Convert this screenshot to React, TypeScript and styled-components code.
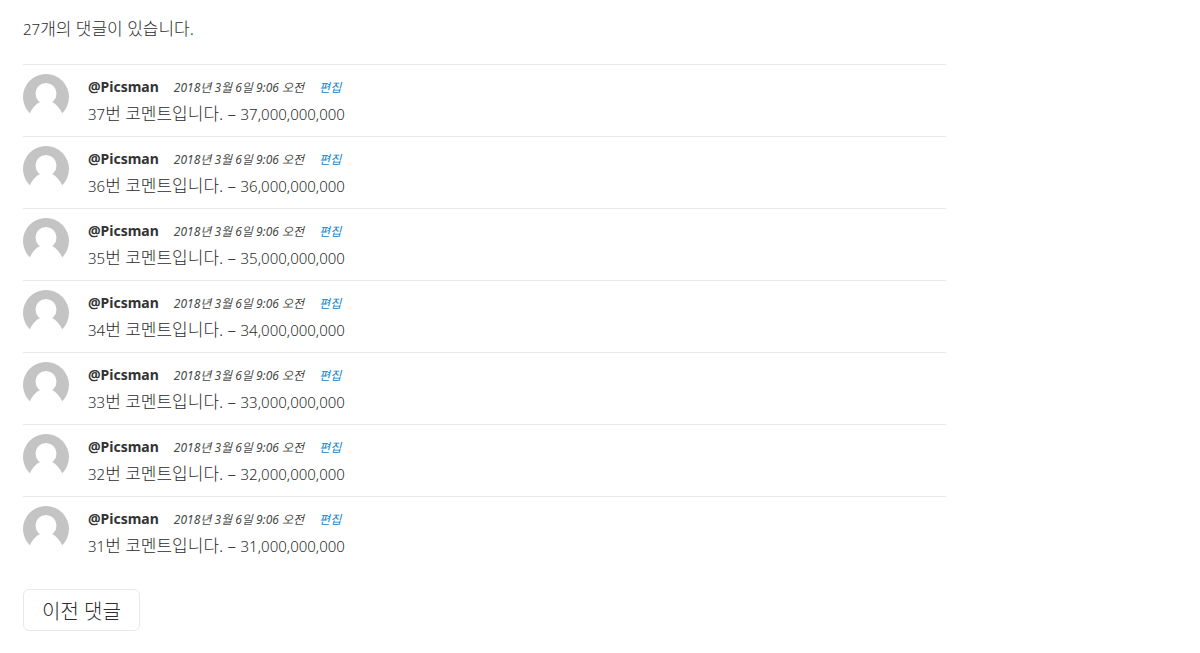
import React from 'react';
import styled, { createGlobalStyle } from 'styled-components';

const GlobalStyle = createGlobalStyle`
  * {
    box-sizing: border-box;
  }

  body {
    margin: 0;
    background: #fff;
    color: #2c2c2c;
    font-family: 'Noto Sans', 'Noto Sans CJK KR', sans-serif;
    font-size: 17px;
    font-weight: 300;
    line-height: 26px;
  }
`;

const Comments = styled.main`
  padding: 16px 23px 22px;
`;

const Count = styled.h2`
  margin: 0 0 22px;
  font-size: 17px;
  font-weight: inherit;
`;

const List = styled.ol`
  width: 80%;
  margin: 0 0 21px;
  padding: 0;
  list-style: none;
`;

const Item = styled.li`
  display: flex;
  gap: 19px;
  min-height: 72px;
  padding: 9px 0;
  border-top: 1px solid #e8e8e8;
`;

const AvatarIcon = styled.svg`
  flex: none;
  width: 46px;
  height: 46px;
`;

const Meta = styled.header`
  display: flex;
  align-items: baseline;
  gap: 15px;
`;

const Author = styled.strong`
  font-size: 14px;
  font-weight: 700;
  color: #333;
`;

const Posted = styled.time`
  font-size: 12px;
  font-style: italic;
  font-weight: 400;
  word-spacing: normal;
  color: #484848;
`;

const EditLink = styled.a`
  font-size: 12px;
  font-style: italic;
  font-weight: 400;
  color: #1484c9;
  text-decoration: none;
`;

const Text = styled.p`
  margin: 0;
`;

const Amount = styled.span`
  font-size: 15px;
`;

const OlderButton = styled.button`
  height: 42px;
  padding: 4px 18px 0;
  border: 1px solid #e8e8e8;
  border-radius: 6px;
  background: #fff;
  color: inherit;
  font: inherit;
  font-size: 20px;
`;

const numbers = [37, 36, 35, 34, 33, 32, 31];

const Avatar = () => (
  <AvatarIcon viewBox="0 0 46 46" aria-hidden="true">
    <circle cx="23" cy="23" r="23" fill="#c4c4c4" />
    <circle cx="23" cy="19.5" r="10.5" fill="#fff" />
    <path d="M6 46V40.5C9 35 12 30.500 17.500 27.500H28.500C34 30.500 37 35 40 40.500V46Z" fill="#fff" />
  </AvatarIcon>
);

export default function App() {
  return (
    <>
      <GlobalStyle />
      <Comments>
        <Count>
          <Amount>27</Amount>개의 댓글이 있습니다.
        </Count>
        <List>
          {numbers.map((n) => (
            <Item key={n}>
              <Avatar />
              <article>
                <Meta>
                  <Author>@Picsman</Author>
                  <Posted dateTime="2018-03-06T09:06">2018년 3월 6일 9:06 오전</Posted>
                  <EditLink href="#edit">편집</EditLink>
                </Meta>
                <Text>
                  <Amount>{n}</Amount>번 코멘트입니다. – <Amount>{n},000,000,000</Amount>
                </Text>
              </article>
            </Item>
          ))}
        </List>
        <OlderButton type="button">이전 댓글</OlderButton>
      </Comments>
    </>
  );
}
